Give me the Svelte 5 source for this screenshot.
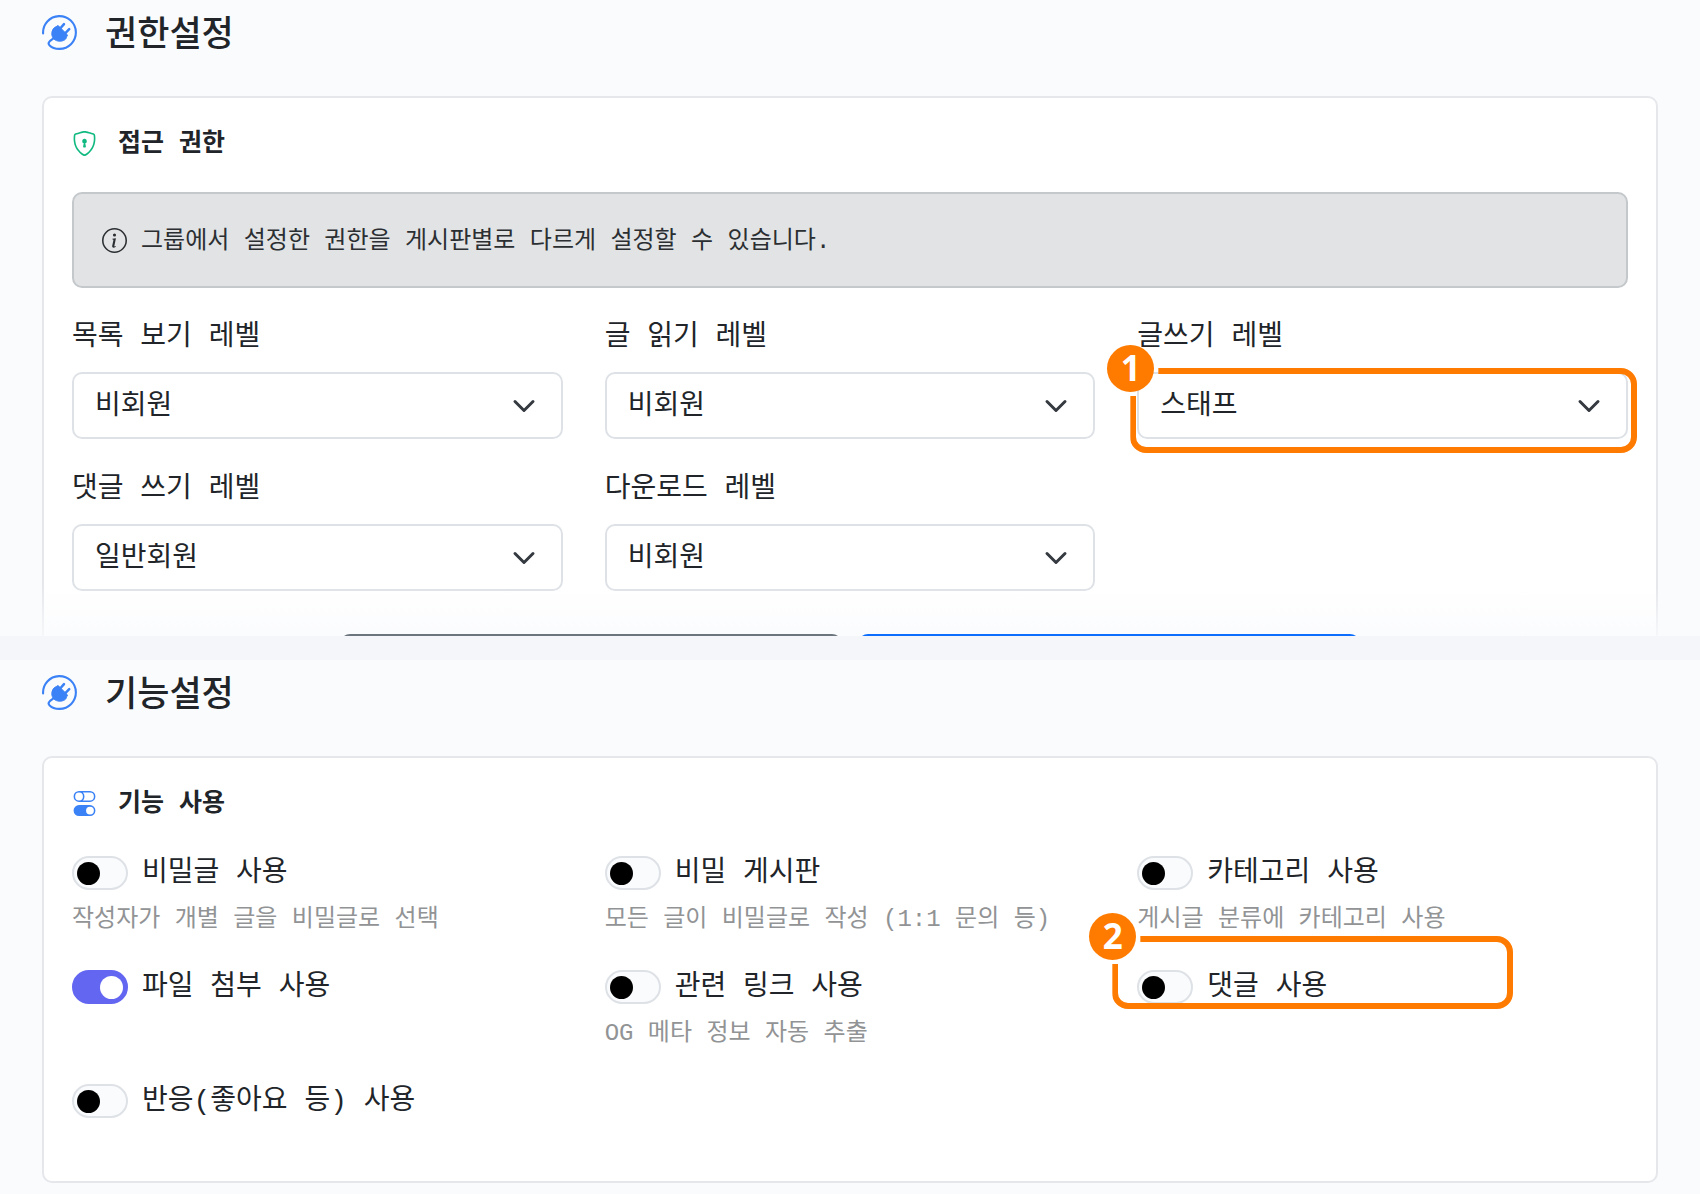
<script>
  const levels = ['비회원', '일반회원', '스태프'];

  let fields = $state([
    { id: 'list-level', label: '목록 보기 레벨', value: '비회원' },
    { id: 'read-level', label: '글 읽기 레벨', value: '비회원' },
    { id: 'write-level', label: '글쓰기 레벨', value: '스태프', step: 1 },
    { id: 'comment-level', label: '댓글 쓰기 레벨', value: '일반회원' },
    { id: 'download-level', label: '다운로드 레벨', value: '비회원' }
  ]);

  let features = $state([
    { id: 'secret-post', label: '비밀글 사용', hint: '작성자가 개별 글을 비밀글로 선택', on: false },
    { id: 'secret-board', label: '비밀 게시판', hint: '모든 글이 비밀글로 작성 (1:1 문의 등)', on: false },
    { id: 'category', label: '카테고리 사용', hint: '게시글 분류에 카테고리 사용', on: false },
    { id: 'attachment', label: '파일 첨부 사용', on: true },
    { id: 'links', label: '관련 링크 사용', hint: 'OG 메타 정보 자동 추출', on: false },
    { id: 'comments', label: '댓글 사용', on: false, step: 2 },
    { id: 'reactions', label: '반응(좋아요 등) 사용', on: false }
  ]);
</script>

{#snippet plugIcon()}
  <svg class="plug" viewBox="0 0 35 35" aria-hidden="true">
    <path
      d="M1.1 18.4A16.4 16.4 0 1 1 17.5 33.9C13.5 33.9 9.6 32.6 7.4 30.2C5.9 28.4 6.4 27.4 7.8 26.2L11.4 23.4"
      fill="none" stroke="currentColor" stroke-width="2.1" stroke-linecap="round" stroke-linejoin="round" />
    <path
      d="M15.2 10.8Q16 10.4 16.7 11.1L25 19.4Q25.8 20.2 25.3 21L24.5 21.8C24.4 24.8 21 26.2 17.8 26.2C12.8 26.2 9.8 22.8 9.8 18.8C9.8 15.4 11.6 12.4 14.3 11.6Z"
      fill="currentColor" stroke="currentColor" stroke-width="1" stroke-linejoin="round" />
    <path d="M18.6 13L22 9.2M23.6 17.8L27.2 14.2" stroke="currentColor" stroke-width="2.5" stroke-linecap="round" />
  </svg>
{/snippet}

{#snippet callout(step)}
  <div class="callout callout-{step}">
    <div class="frame"></div>
    <span class="badge">{step}</span>
  </div>
{/snippet}

<main>
  <section class="panel">
    <header>
      {@render plugIcon()}
      <h1>권한설정</h1>
    </header>
    <div class="card open">
      <h2>
        <svg class="small-icon green" viewBox="0 0 16 16" fill="currentColor" aria-hidden="true">
          <path d="M5.338 1.59a61 61 0 0 0-2.837.856.48.48 0 0 0-.328.39c-.554 4.157.726 7.19 2.253 9.188a10.7 10.7 0 0 0 2.287 2.233c.346.244.652.42.893.533q.18.085.293.118a1 1 0 0 0 .101.025 1 1 0 0 0 .1-.025q.114-.034.294-.118c.24-.113.547-.29.893-.533a10.7 10.7 0 0 0 2.287-2.233c1.527-1.997 2.807-5.031 2.253-9.188a.48.48 0 0 0-.328-.39c-.651-.213-1.75-.56-2.837-.855C9.552 1.29 8.531 1.067 8 1.067c-.53 0-1.552.223-2.662.524zM5.072.56C6.157.265 7.31 0 8 0s1.843.265 2.928.56c1.11.3 2.229.655 2.887.87a1.54 1.54 0 0 1 1.044 1.262c.596 4.477-.787 7.795-2.465 9.99a11.8 11.8 0 0 1-2.517 2.453 7 7 0 0 1-1.048.625c-.28.132-.581.24-.829.24s-.548-.108-.829-.24a7 7 0 0 1-1.048-.625 11.8 11.8 0 0 1-2.517-2.453C1.928 10.487.545 7.169 1.141 2.692A1.54 1.54 0 0 1 2.185 1.43 63 63 0 0 1 5.072.56" />
          <path d="M9.5 6.5a1.5 1.5 0 0 1-1 1.415l.385 1.99a.5.5 0 0 1-.491.595h-.788a.5.5 0 0 1-.49-.595l.384-1.99a1.5 1.5 0 1 1 2-1.415" />
        </svg>
        <span>접근 권한</span>
      </h2>
      <p class="notice">
        <svg viewBox="0 0 16 16" fill="currentColor" aria-hidden="true">
          <path d="M8 15A7 7 0 1 1 8 1a7 7 0 0 1 0 14m0 1A8 8 0 1 0 8 0a8 8 0 0 0 0 16" />
          <path d="m8.93 6.588-2.29.287-.082.38.45.083c.294.07.352.176.288.469l-.738 3.468c-.194.897.105 1.319.808 1.319.545 0 1.178-.252 1.465-.598l.088-.416c-.2.176-.492.246-.686.246-.275 0-.375-.193-.304-.533zM9 4.5a1 1 0 1 1-2 0 1 1 0 0 1 2 0" />
        </svg>
        <span>그룹에서 설정한 권한을 게시판별로 다르게 설정할 수 있습니다.</span>
      </p>
      <div class="grid fields">
        {#each fields as field (field.id)}
          <div class="field">
            <label for={field.id}>{field.label}</label>
            <div class="select">
              <select id={field.id} bind:value={field.value}>
                {#each levels as level}
                  <option value={level}>{level}</option>
                {/each}
              </select>
              <svg viewBox="0 0 16 16" aria-hidden="true">
                <path d="m2 5 6 6 6-6" fill="none" stroke="#343a40" stroke-width="2" stroke-linecap="round" stroke-linejoin="round" />
              </svg>
              {#if field.step}{@render callout(field.step)}{/if}
            </div>
          </div>
        {/each}
      </div>
    </div>
    <div class="actions">
      <button class="back" type="button" aria-label="목록"></button>
      <button class="save" type="button" aria-label="저장"></button>
    </div>
  </section>

  <section class="panel last">
    <header>
      {@render plugIcon()}
      <h1>기능설정</h1>
    </header>
    <div class="card">
      <h2>
        <svg class="small-icon blue" viewBox="0 0 16 16" fill="currentColor" aria-hidden="true">
          <path d="M4.5 9a3.5 3.5 0 1 0 0 7h7a3.5 3.5 0 1 0 0-7zm7 6a2.5 2.5 0 1 1 0-5 2.5 2.5 0 0 1 0 5m-7-14a2.5 2.5 0 1 0 0 5 2.5 2.5 0 0 0 0-5m2.45 0A3.5 3.5 0 0 1 8 3.5 3.5 3.5 0 0 1 6.95 6h4.55a2.5 2.5 0 0 0 0-5zM4.5 0h7a3.5 3.5 0 1 1 0 7h-7a3.5 3.5 0 1 1 0-7" />
        </svg>
        <span>기능 사용</span>
      </h2>
      <div class="grid features">
        {#each features as feature (feature.id)}
          <div class="feature">
            <div class="toggle">
              <input type="checkbox" role="switch" id={feature.id} bind:checked={feature.on} />
              <label for={feature.id}>{feature.label}</label>
              {#if feature.step}{@render callout(feature.step)}{/if}
            </div>
            {#if feature.hint}<p class="hint">{feature.hint}</p>{/if}
          </div>
        {/each}
      </div>
    </div>
  </section>
</main>

<style>
  :global(body) {
    background: #fafbfd;
  }

  main {
    display: flex;
    flex-direction: column;
    gap: 24px;
    background: #f5f6f9;
    color: #212529;
    font-family: 'Liberation Mono', 'Noto Sans CJK KR', monospace;
    font-size: 28px;
  }

  h1, h2, p {
    margin: 0;
  }

  .panel {
    position: relative;
    padding: 0 42px;
    background: #fafbfd;
  }

  .panel.last {
    padding-bottom: 11px;
  }

  header {
    display: flex;
    align-items: center;
    gap: 28px;
    height: 65px;
    margin-bottom: 31px;
  }

  .plug {
    width: 35px;
    height: 35px;
    color: #3b82f6;
  }

  h1 {
    padding-top: 8px;
    font-size: 35px;
    font-weight: 500;
    line-height: 42px;
  }

  .card {
    padding: 28px 28px 15px;
    border: 2px solid #e5e7eb;
    border-radius: 10px;
    background: #fff;
  }

  .card.open {
    padding-bottom: 45px;
    border-bottom: 0;
    border-radius: 10px 10px 0 0;
  }

  h2 {
    display: flex;
    align-items: center;
    gap: 21px;
    margin-bottom: 32px;
    font-size: 25px;
    font-weight: 600;
  }

  h2 span,
  .notice span {
    padding-top: 4px;
    line-height: 30px;
  }

  .small-icon {
    width: 25px;
    height: 25px;
  }

  .green {
    color: #10b981;
  }

  .blue {
    color: #3b82f6;
  }

  .notice {
    display: flex;
    align-items: center;
    gap: 14px;
    margin-bottom: 26px;
    padding: 29px 28px;
    border: 2px solid #c4c8cb;
    border-radius: 10px;
    background: #e2e3e5;
    color: #2b2f32;
    font-size: 24px;
  }

  .notice svg {
    width: 25px;
    height: 25px;
  }

  .grid {
    display: grid;
    grid-template-columns: repeat(3, 1fr);
    column-gap: 42px;
  }

  .fields {
    row-gap: 27px;
  }

  .field {
    display: flex;
    flex-direction: column;
    gap: 10px;
  }

  .field label {
    line-height: 48px;
  }

  .select {
    position: relative;
    display: grid;
    align-items: center;
  }

  select,
  .select svg {
    grid-area: 1 / 1;
  }

  select {
    width: 100%;
    height: 67px;
    padding: 2px 64px 0 21px;
    border: 2px solid #dee2e6;
    border-radius: 10px;
    background: #fff;
    color: inherit;
    font: inherit;
    appearance: none;
  }

  .select svg {
    justify-self: end;
    width: 24px;
    height: 24px;
    margin-right: 27px;
    pointer-events: none;
  }

  .actions {
    position: absolute;
    inset: auto 0 0;
    display: flex;
    align-items: flex-start;
    gap: 16px;
    height: 2px;
    padding: 48px 20% 0;
    overflow: hidden;
    background: linear-gradient(#fafbfd00, #fafbfdcc);
  }

  .actions button {
    flex: 1;
    height: 66px;
    border: 0;
    border-radius: 10px;
  }

  .back {
    background: #6c757d;
  }

  .save {
    background: #0d6efd;
  }

  .features {
    row-gap: 28px;
  }

  .feature {
    min-height: 86px;
  }

  .toggle {
    position: relative;
    display: flex;
    align-items: center;
    gap: 14px;
  }

  .toggle label {
    padding-top: 2px;
    line-height: 40px;
  }

  input {
    display: grid;
    align-items: center;
    box-sizing: border-box;
    width: 56px;
    height: 34px;
    margin: 0;
    padding: 0 3px;
    border: 2px solid #dee2e6;
    border-radius: 17px;
    background: #fafbfd;
    appearance: none;
  }

  input::before {
    content: '';
    width: 23px;
    height: 23px;
    border-radius: 50%;
    background: #000;
  }

  input:checked {
    justify-content: end;
    border-color: #6366f1;
    background: #6366f1;
  }

  input:checked::before {
    background: #fff;
  }

  .hint {
    margin-top: 8px;
    color: #919395;
    font-size: 24px;
    line-height: 36px;
  }

  .callout {
    position: absolute;
    pointer-events: none;
  }

  .callout-1 {
    inset: -4px -9px -14px -7px;
  }

  .callout-2 {
    inset: -30px 115px -1px -25px;
  }

  /* The frame leaves its top-left corner open for the number badge. */
  .frame {
    box-sizing: border-box;
    height: 100%;
    border: 6px solid #ff7b00;
    border-radius: 16px;
    clip-path: polygon(28px 0, 100% 0, 100% 100%, 0 100%, 0 28px, 28px 28px);
  }

  .badge {
    position: absolute;
    top: -23px;
    left: -23px;
    width: 47px;
    height: 47px;
    border-radius: 50%;
    background: #ff7b00;
    color: #fff;
    font-family: 'Open Sans', sans-serif;
    font-size: 35px;
    font-weight: 700;
    line-height: 46px;
    text-align: center;
  }
</style>
